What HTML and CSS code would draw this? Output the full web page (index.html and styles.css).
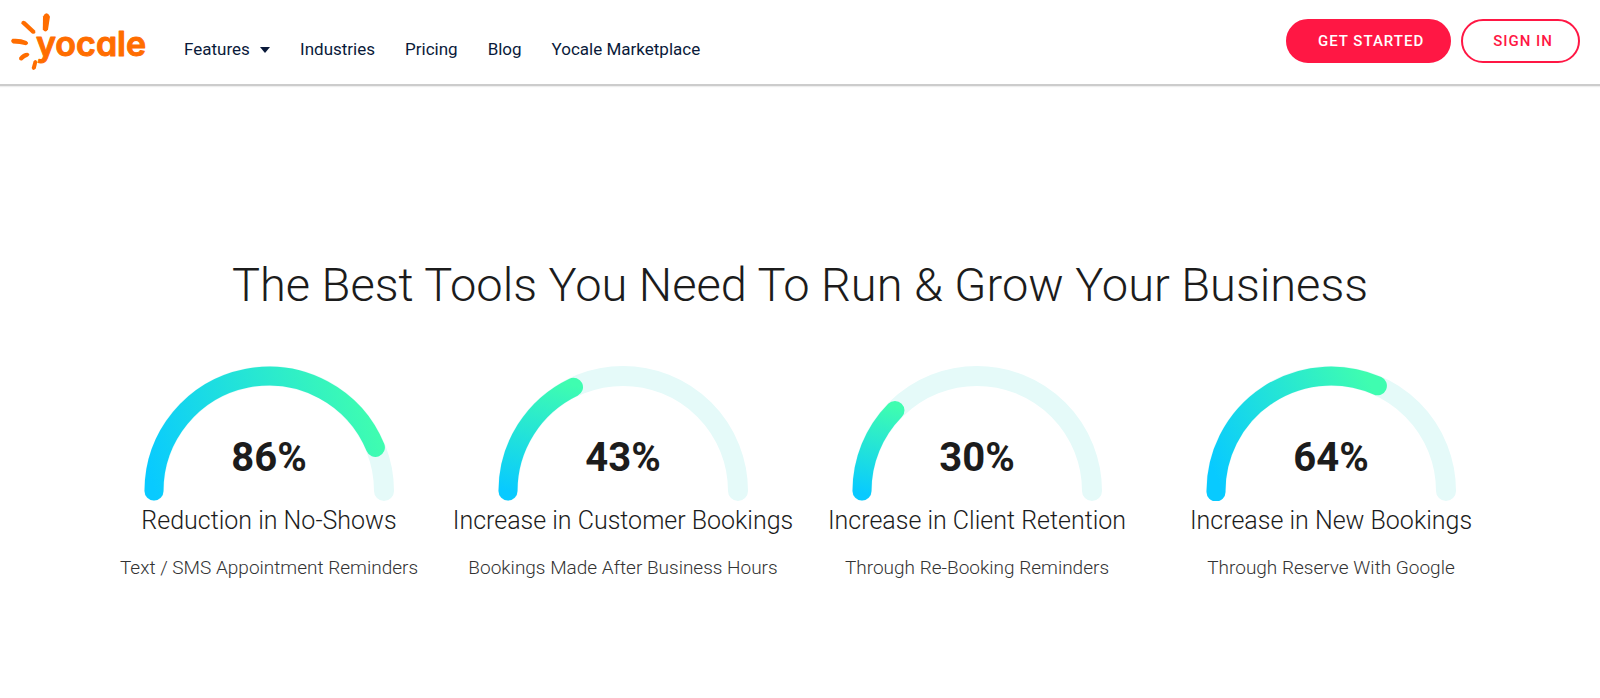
FILE: index.html
```html
<!DOCTYPE html>
<html lang="en">
<head>
<meta charset="utf-8">
<title>Yocale</title>
<link rel="stylesheet" href="styles.css">
</head>
<body>
<header class="header">
  <a class="logo" href="#" aria-label="Yocale home">
    <svg class="logo-art" viewBox="0 0 142 64" width="142" height="64">
      <g class="rays">
        <path d="M35 6.500Q38.500 0 42 6.500L40 19.500Q37.500 23.500 34.800 19.500Z" />
        <path d="M13.200 13.500Q13.500 9.500 17.500 11.500L27 20.500Q28.500 24.500 24 23.500Z"/>
        <path d="M4.500 28.800Q12 28 18.500 31Q22 33.500 18 35.200Q12 34 5 33.600Q1.500 31 4.500 28.800Z"/>
        <path d="M11.200 47.500Q14.500 43 19.500 42.800Q23 44 20 46.500Q17 47.500 14 50.500Q10.500 51 11.200 47.500Z"/>
        <path d="M25.500 51.500Q28 48.500 29.300 52L27.800 58.500Q25 61.500 23.700 58Z"/>
      </g>
      <text class="wordmark" x="28" y="46">yocale</text>
    </svg>
  </a>
  <nav class="nav">
    <a class="nav-link" href="#">Features <svg class="caret" viewBox="0 0 10 6" width="10" height="6"><path d="M0 0H10L5 6Z"/></svg></a>
    <a class="nav-link" href="#">Industries</a>
    <a class="nav-link" href="#">Pricing</a>
    <a class="nav-link" href="#">Blog</a>
    <a class="nav-link" href="#">Yocale Marketplace</a>
  </nav>
  <div class="actions">
    <a class="btn btn-solid" href="#">GET STARTED</a>
    <a class="btn btn-outline" href="#">SIGN IN</a>
  </div>
</header>
<main class="main">
  <h1 class="heading">The Best Tools You Need To Run &amp; Grow Your Business</h1>
  <div class="stats">
    <section class="stat">
      <div class="gauge">
        <svg class="gauge-art" viewBox="0 0 250 135">
          <defs><linearGradient id="g1" gradientUnits="userSpaceOnUse" x1="10" y1="125" x2="231" y2="55"><stop offset="0" stop-color="#08caff"/><stop offset="1" stop-color="#3ffdb0"/></linearGradient></defs>
          <path class="track" d="M10 125A115 115 0 0 1 240 125"/>
          <path class="value" stroke="url(#g1)" d="M10 125A115 115 0 0 1 231.400 81.400"/>
        </svg>
        <strong class="percent">86%</strong>
      </div>
      <h2 class="title">Reduction in No-Shows</h2>
      <p class="note">Text / SMS Appointment Reminders</p>
    </section>
    <section class="stat">
      <div class="gauge">
        <svg class="gauge-art" viewBox="0 0 250 135">
          <defs><linearGradient id="g2" gradientUnits="userSpaceOnUse" x1="30" y1="130" x2="62" y2="15"><stop offset="0" stop-color="#08caff"/><stop offset="1" stop-color="#3ffdb0"/></linearGradient></defs>
          <path class="track" d="M10 125A115 115 0 0 1 240 125"/>
          <path class="value" stroke="url(#g2)" d="M10 125A115 115 0 0 1 75.500 21.200"/>
        </svg>
        <strong class="percent">43%</strong>
      </div>
      <h2 class="title">Increase in Customer Bookings</h2>
      <p class="note">Bookings Made After Business Hours</p>
    </section>
    <section class="stat">
      <div class="gauge">
        <svg class="gauge-art" viewBox="0 0 250 135">
          <defs><linearGradient id="g3" gradientUnits="userSpaceOnUse" x1="20" y1="130" x2="42" y2="40"><stop offset="0" stop-color="#08caff"/><stop offset="1" stop-color="#3ffdb0"/></linearGradient></defs>
          <path class="track" d="M10 125A115 115 0 0 1 240 125"/>
          <path class="value" stroke="url(#g3)" d="M10 125A115 115 0 0 1 43 44.400"/>
        </svg>
        <strong class="percent">30%</strong>
      </div>
      <h2 class="title">Increase in Client Retention</h2>
      <p class="note">Through Re-Booking Reminders</p>
    </section>
    <section class="stat">
      <div class="gauge">
        <svg class="gauge-art" viewBox="0 0 250 135">
          <defs><linearGradient id="g4" gradientUnits="userSpaceOnUse" x1="10" y1="110" x2="170" y2="30"><stop offset="0" stop-color="#08caff"/><stop offset="1" stop-color="#3ffdb0"/></linearGradient></defs>
          <path class="track" d="M10 125A115 115 0 0 1 240 125"/>
          <path class="value" stroke="url(#g4)" d="M10 126V125A115 115 0 0 1 171.400 19.800"/>
        </svg>
        <strong class="percent">64%</strong>
      </div>
      <h2 class="title">Increase in New Bookings</h2>
      <p class="note">Through Reserve With Google</p>
    </section>
  </div>
</main>
</body>
</html>
```
FILE: styles.css
```css
* { box-sizing: border-box; }
body {
  margin: 0;
  background: #fff;
  color: #1c1c1c;
  font-family: Roboto, "Liberation Sans", sans-serif;
}
a { color: inherit; text-decoration: none; }
.header {
  display: flex;
  align-items: flex-start;
  padding: 10px 20px 10px 8px;
  border-bottom: 2px solid #ccc;
  box-shadow: 0 1px 1px #eee;
}
.logo, .logo-art { display: block; }
.rays { fill: #ff6d00; }
.wordmark {
  font: 600 34px Inter, sans-serif;
  font-feature-settings: "cv11", "ss01";
  fill: #ff6d00;
  stroke: #ff6d00;
  stroke-width: 1px;
  stroke-linejoin: round;
}
.nav {
  display: flex;
  gap: 30px;
  padding: 29px 0 0 34px;
  color: #0a1a3a;
  font-size: 17px;
  line-height: 20px;
}
.caret { margin: 0 0 2px 6px; fill: #0a1a3a; }
.actions {
  display: flex;
  gap: 10px;
  margin-left: auto;
  padding-top: 9px;
}
.btn {
  padding: 10px 25px 10px 30px;
  border: 2px solid #ff1744;
  border-radius: 22px;
  font-size: 15px;
  font-weight: 500;
  line-height: 20px;
  letter-spacing: 1px;
  color: #ff1744;
}
.btn-solid { background: #ff1744; color: #fff; }
.main { padding: 170px 40px 100px; text-align: center; }
.heading {
  margin: 0;
  font-size: 47px;
  font-weight: 300;
  line-height: 58px;
}
.stats {
  display: grid;
  grid-template-columns: repeat(4, 1fr);
  max-width: 1416px;
  margin: 52px auto 0;
}
.gauge { position: relative; width: 250px; margin: 0 auto; }
.gauge-art { display: block; width: 100%; }
.track { fill: none; stroke: #e5faf9; stroke-width: 20; stroke-linecap: round; }
.value { fill: none; stroke-width: 19; stroke-linecap: round; }
.percent {
  position: absolute;
  right: 0;
  bottom: 18px;
  left: 0;
  font-size: 40px;
  font-weight: 700;
  line-height: 50px;
}
.title {
  margin: 4px 0 0;
  font-size: 25px;
  font-weight: 300;
  line-height: 32px;
}
.note {
  margin: 19px 0 0;
  color: #333;
  font-size: 19px;
  font-weight: 300;
  line-height: 24px;
}
```
